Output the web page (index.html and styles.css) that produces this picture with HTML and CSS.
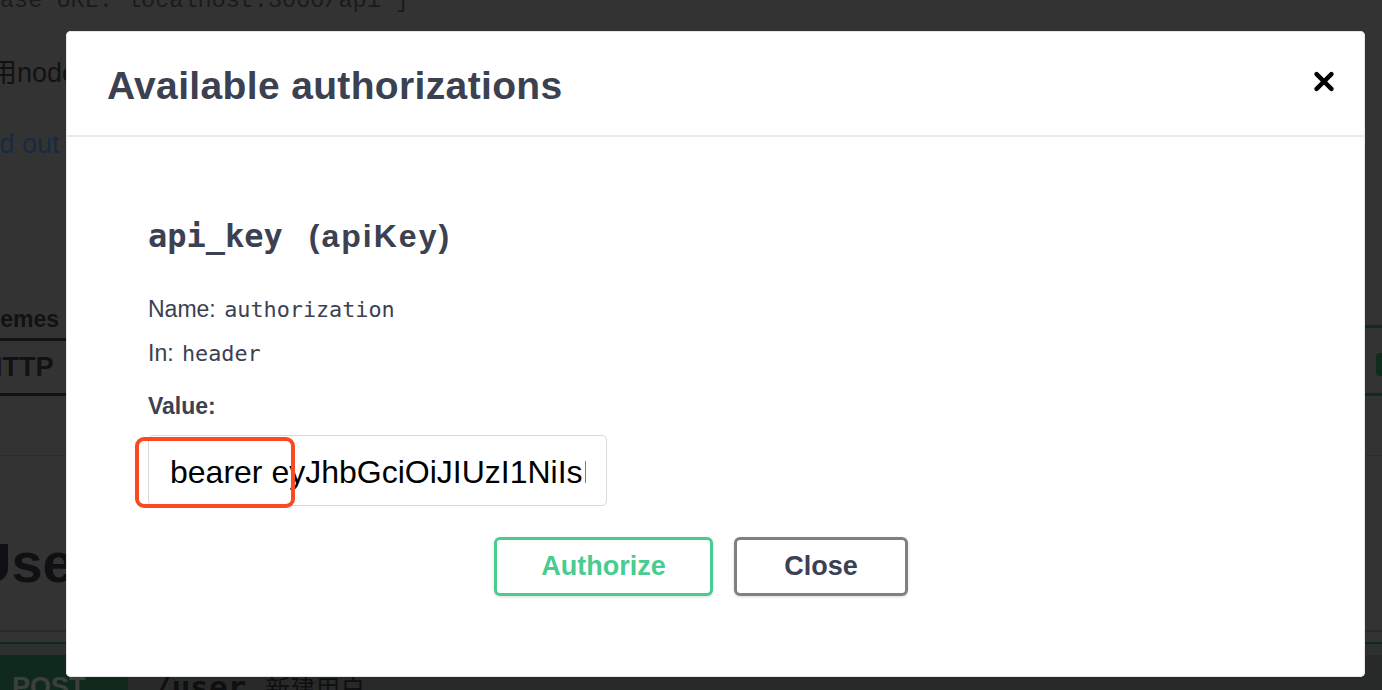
FILE: index.html
```html
<!DOCTYPE html>
<html lang="zh">
<head>
<meta charset="utf-8">
<title>Available authorizations</title>
<link rel="stylesheet" href="styles.css">
</head>
<body>
<div class="bg">
  <p class="base-url">ase URL: localhost:3000/api ]</p>
  <p class="desc">使用node.js 构建的接口文档</p>
  <p class="link">Find out more</p>
  <div class="schemes-row">
    <div class="schemes">
      <div class="schemes-label">Schemes</div>
      <div class="select">HTTP</div>
    </div>
    <div class="auth-btn"><span class="lock"></span></div>
  </div>
  <div class="tag"><h3 class="tag-title">User</h3></div>
  <div class="opblock">
    <div class="op-summary">
      <span class="method">POST</span>
      <span class="path">/user</span>
      <span class="op-desc">新建用户</span>
    </div>
  </div>
</div>

<div class="modal">
  <div class="modal-header">
    <h3 class="modal-title">Available authorizations</h3>
    <button class="close-x" aria-label="close">
      <svg width="20" height="21" viewBox="0 0 20 21"><path d="M2.6 3.1 L17.4 17.9 M17.4 3.1 L2.6 17.9" stroke="#000" stroke-width="4.4" stroke-linecap="round" fill="none"/></svg>
    </button>
  </div>
  <div class="modal-body">
    <h4 class="scheme-name"><code>api_key</code><span class="scheme-type">(apiKey)</span></h4>
    <p class="field field-name">Name: <code>authorization</code></p>
    <p class="field field-in">In: <code>header</code></p>
    <p class="field field-value"><b>Value:</b></p>
    <div class="input-wrap">
      <input class="value-input" type="text" value="bearer eyJhbGciOiJIUzI1NiIsInR5cCI6IkpXVCJ9">
      <div class="highlight"></div>
    </div>
    <div class="btn-row">
      <button class="btn btn-auth">Authorize</button>
      <button class="btn btn-close">Close</button>
    </div>
  </div>
</div>
</body>
</html>
```

FILE: styles.css
```css
* { box-sizing: border-box; }

html, body {
  margin: 0;
  padding: 0;
}

body {
  width: 1382px;
  height: 690px;
  overflow: hidden;
  position: relative;
  background: #333333;
  font-family: "Liberation Sans", Arial, "Noto Sans CJK SC", sans-serif;
}

/* ---------- dimmed background page ---------- */
.bg p { margin: 0; white-space: nowrap; }

.base-url {
  margin-top: -11px !important;
  height: 23px;
  line-height: 23px;
  font-family: "Liberation Mono", "Courier New", monospace;
  font-size: 23.5px;
  color: #1a1b1e;
}

.desc {
  margin-top: 44px !important;
  margin-left: -37px !important;
  height: 34px;
  line-height: 34px;
  font-size: 27px;
  color: #111214;
  font-family: "Liberation Sans", "Noto Sans CJK SC", sans-serif;
}

.link {
  margin-top: 37px !important;
  margin-left: -38px !important;
  height: 34px;
  line-height: 34px;
  font-size: 27px;
  color: #182a42;
}

.schemes-row {
  margin-top: 144px;
  display: flex;
  justify-content: space-between;
  align-items: flex-start;
  padding-bottom: 59px;
  border-bottom: 1px solid #2c2c2c;
}

.schemes-label {
  margin-left: -42px;
  height: 28px;
  line-height: 28px;
  font-size: 23px;
  font-weight: bold;
  color: #111214;
  white-space: nowrap;
}

.select {
  margin-top: 5px;
  margin-left: -30px;
  width: 220px;
  height: 58px;
  border-top: 3px solid #121316;
  border-bottom: 3px solid #121316;
  border-radius: 6px;
  padding-left: 13px;
  line-height: 52px;
  font-size: 27px;
  font-weight: bold;
  color: #111214;
}

.auth-btn {
  margin-top: 20px;
  margin-right: -113px;
  width: 140px;
  height: 71px;
  border: 3px solid #0f2c1c;
  border-radius: 6px;
  display: flex;
  align-items: center;
  padding-left: 18px;
}

.lock {
  display: block;
  width: 14px;
  height: 23px;
  margin-top: 7px;
  border-radius: 4px;
  background: #0f2c1c;
}

.tag {
  margin-left: -29px;
  padding-bottom: 35px;
  border-bottom: 2px solid #292a2b;
}

.tag-title {
  margin: 75px 0 0;
  height: 64px;
  line-height: 64px;
  font-size: 56px;
  font-weight: bold;
  color: #0f1013;
}

.opblock {
  margin-top: 10px;
  margin-left: -20px;
  border-top: 2px solid #0f2a1d;
  background: #2e302f;
  padding-top: 11px;
}

.op-summary {
  display: flex;
  align-items: flex-start;
  height: 80px;
  background: #282a29;
}

.method {
  width: 148px;
  height: 80px;
  background: #0f2a1d;
  color: #3d3f3e;
  font-size: 27px;
  font-weight: bold;
  line-height: 30px;
  padding: 17px 0 0 32px;
}

.path {
  margin-left: 25px;
  padding-top: 12px;
  line-height: 40px;
  font-family: "DejaVu Sans Mono", monospace;
  font-weight: bold;
  font-size: 31px;
  color: #0e0f11;
}

.op-desc {
  margin-left: 19px;
  padding-top: 15px;
  line-height: 34px;
  font-family: "Noto Sans CJK SC", sans-serif;
  font-size: 25px;
  color: #0e0f11;
}

/* ---------- modal ---------- */
.modal {
  position: absolute;
  left: 66px;
  top: 31px;
  width: 1299px;
  height: 646px;
  background: #ffffff;
  border-radius: 5px;
  box-shadow: inset 0 0 0 1px #e6e6e6;
  color: #3b4151;
}

.modal-header {
  height: 106px;
  padding: 5px 31px 0 41px;
  border-bottom: 2px solid #ebebeb;
  display: flex;
  align-items: center;
  justify-content: space-between;
}

.modal-title {
  margin: 0;
  font-size: 39px;
  line-height: 39px;
  font-weight: bold;
  letter-spacing: 0.35px;
  color: #3b4151;
}

.close-x {
  margin: 0 0 8px;
  padding: 0;
  border: 0;
  background: none;
  width: 20px;
  height: 21px;
  display: block;
}

.close-x svg { display: block; }

.modal-body {
  padding: 0 82px;
}

.scheme-name {
  margin: 79px 0 0;
  font-size: 32px;
  line-height: 40px;
  font-weight: bold;
  color: #3b4151;
  white-space: nowrap;
}

.scheme-name code {
  font-family: "DejaVu Sans Mono", monospace;
  font-size: 32px;
  font-weight: bold;
}

.scheme-type {
  margin-left: 26px;
  letter-spacing: 2px;
}

.field {
  margin: 0;
  font-size: 23px;
  line-height: 30px;
  color: #3b4151;
}

.field code {
  font-family: "DejaVu Sans Mono", monospace;
  font-size: 21.8px;
  margin-left: 2px;
}

.field-name { margin-top: 38px; }
.field-in { margin-top: 13px; }
.field-value { margin-top: 22px; }

.input-wrap {
  position: relative;
  width: 459px;
  margin-top: 14px;
}

.value-input {
  display: block;
  width: 100%;
  height: 71px;
  margin: 0;
  border: 1px solid #d9d9d9;
  border-radius: 5px;
  padding: 4px 20px 0 21px;
  font-family: "Liberation Sans", Arial, sans-serif;
  font-size: 32px;
  color: #000;
  background: #fff;
  outline: none;
}

.highlight {
  position: absolute;
  left: -13px;
  top: 2px;
  width: 160px;
  height: 71px;
  border: 4px solid #fb4a22;
  border-radius: 9px;
  pointer-events: none;
}

.btn-row {
  display: flex;
  justify-content: center;
  gap: 21px;
  margin-top: 31px;
  padding-right: 29px;
}

.btn {
  height: 59px;
  margin: 0;
  padding: 0;
  border-radius: 6px;
  background: #fff;
  font-family: "Liberation Sans", Arial, sans-serif;
  font-size: 27px;
  font-weight: bold;
  box-shadow: 0 1px 3px rgba(0, 0, 0, 0.15);
}

.btn-auth {
  width: 219px;
  border: 3px solid #49cc90;
  color: #49cc90;
}

.btn-close {
  width: 174px;
  border: 3px solid #808080;
  color: #3b4151;
}
```
